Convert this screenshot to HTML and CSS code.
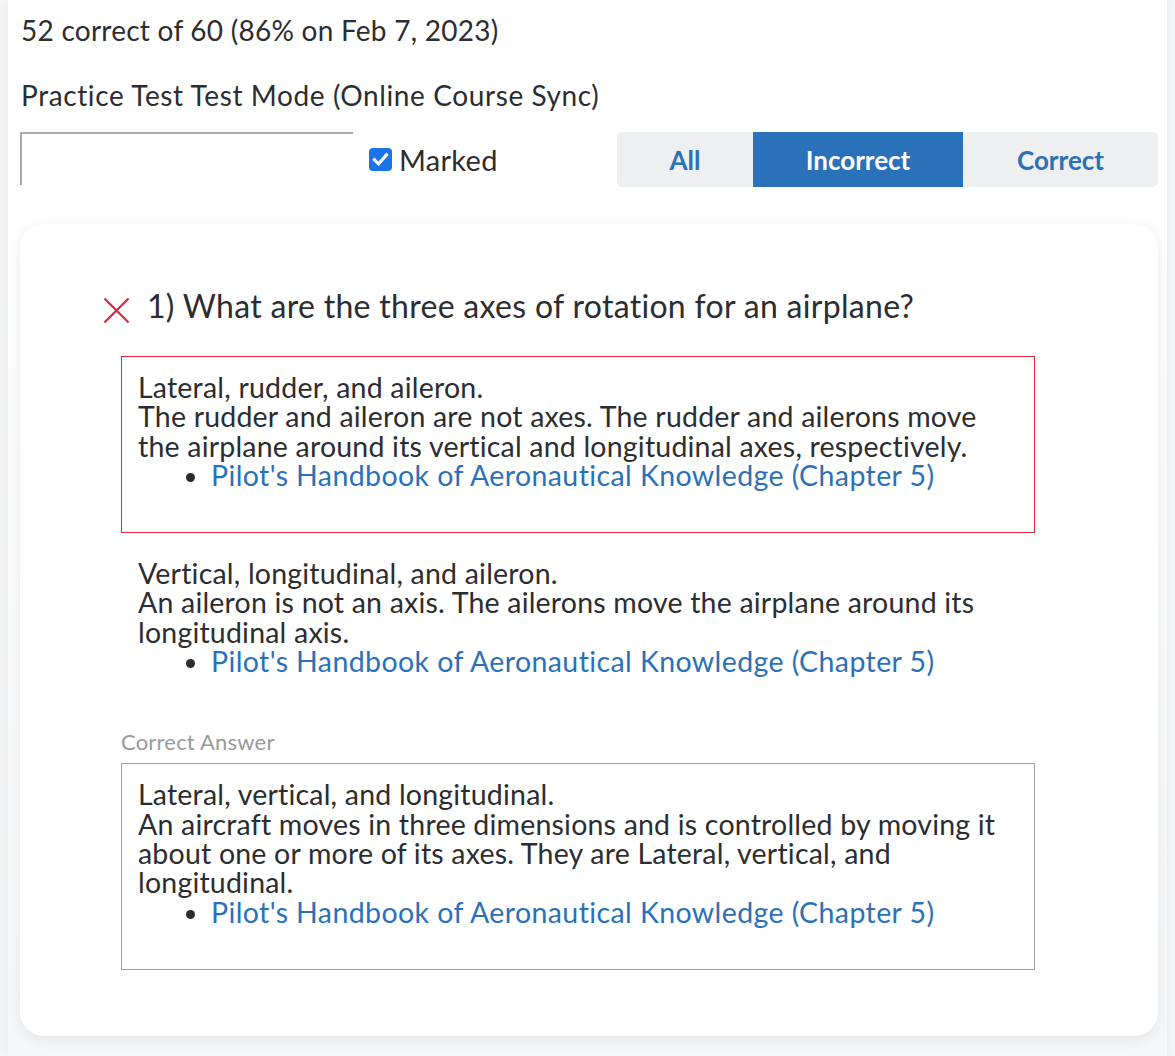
FILE: index.html
```html
<!DOCTYPE html>
<html>
<head>
<meta charset="utf-8">
<link rel="stylesheet" href="styles.css">
</head>
<body>
<div class="page">
  <div class="top">
    <div class="score">52 correct of 60 (86% on Feb 7, 2023)</div>
    <div class="mode">Practice Test Test Mode (Online Course Sync)</div>
    <div class="controls">
      <div class="search"></div>
      <label class="marked">
        <span class="check"><svg width="23" height="23" viewBox="0 0 23 23"><rect x="0" y="0" width="23" height="23" rx="4" fill="#1a73e8"/><path d="M5.5 11.8 L9.6 16 L17.5 6.8" fill="none" stroke="#fff" stroke-width="3.2" stroke-linecap="square"/></svg></span>
        Marked
      </label>
      <div class="seg">
        <div class="seg-item seg-all">All</div>
        <div class="seg-item seg-inc active">Incorrect</div>
        <div class="seg-item seg-cor">Correct</div>
      </div>
    </div>
  </div>
  <div class="card">
    <div class="question">
      <svg class="xicon" width="28" height="28" viewBox="0 0 28 28"><path d="M1.5 1.5 L26.5 26.5 M26.5 1.5 L1.5 26.5" stroke="#dc2a3f" stroke-width="2.4" fill="none"/></svg>
      <span>1) What are the three axes of rotation for an airplane?</span>
    </div>
    <div class="answer wrong">
      <div>Lateral, rudder, and aileron.</div>
      <div>The rudder and aileron are not axes. The rudder and ailerons move the airplane around its vertical and longitudinal axes, respectively.</div>
      <ul><li><a href="#">Pilot's Handbook of Aeronautical Knowledge (Chapter 5)</a></li></ul>
    </div>
    <div class="answer plain">
      <div>Vertical, longitudinal, and aileron.</div>
      <div>An aileron is not an axis. The ailerons move the airplane around its longitudinal axis.</div>
      <ul><li><a href="#">Pilot's Handbook of Aeronautical Knowledge (Chapter 5)</a></li></ul>
    </div>
    <div class="label">Correct Answer</div>
    <div class="answer right">
      <div>Lateral, vertical, and longitudinal.</div>
      <div>An aircraft moves in three dimensions and is controlled by moving it about one or more of its axes. They are Lateral, vertical, and longitudinal.</div>
      <ul><li><a href="#">Pilot's Handbook of Aeronautical Knowledge (Chapter 5)</a></li></ul>
    </div>
  </div>
</div>
</body>
</html>
```
FILE: styles.css
```css
html, body {
  margin: 0;
  padding: 0;
}
body {
  background: #f4f5f6;
  font-family: Lato, "Open Sans", sans-serif;
  color: #2b2d31;
  height: 1056px;
  overflow: hidden;
}
.page {
  margin: 0 8px;
  box-shadow: 0 0 10px rgba(0,0,0,0.06);
  padding: 0 9px 20px 12px;
  min-height: 1056px;
  box-sizing: border-box;
  background: linear-gradient(#fff 0, #fff 200px, #f6f7f8 1056px);
}
.top {
  padding-top: 10px;
}
.score {
  font-size: 28px;
  letter-spacing: 0.25px;
  line-height: 40px;
  padding-left: 1px;
}
.mode {
  font-size: 28px;
  letter-spacing: 0.6px;
  line-height: 40px;
  margin-top: 25px;
  padding-left: 1px;
}
.controls {
  display: flex;
  align-items: center;
  margin-top: 17px;
  height: 55px;
}
.search {
  width: 333px;
  height: 53px;
  border-top: 2px solid #a9a9a9;
  border-left: 2px solid #a9a9a9;
  box-sizing: border-box;
  align-self: flex-start;
}
.marked {
  display: flex;
  align-items: center;
  font-size: 29px;
  letter-spacing: 0.3px;
  margin-left: 16px;
  gap: 7px;
}
.check {
  display: flex;
}
.seg {
  margin-left: auto;
  display: flex;
  width: 541px;
  height: 55px;
  background: #eeeff1;
  border-radius: 5px;
  overflow: hidden;
}
.seg-item {
  display: flex;
  align-items: center;
  justify-content: center;
  font-size: 26px;
  font-weight: 700;
  color: #2a71b9;
}
.seg-all { width: 136px; }
.seg-inc { width: 210px; }
.seg-cor { flex: 1; }
.seg-item.active {
  background: #2a71b9;
  color: #fff;
}
.card {
  margin-top: 37px;
  background: #fff;
  border-radius: 24px;
  box-shadow: 0 4px 14px rgba(0,0,0,0.08);
  padding: 64px 123px 66px 101px;
}
.question {
  display: flex;
  align-items: center;
  font-size: 32px;
  letter-spacing: 0.3px;
  line-height: 36px;
  height: 36px;
}
.xicon {
  width: 27px;
  height: 27px;
  margin: 9px 17px 0 -18px;
}
.answer {
  font-size: 28.5px;
  letter-spacing: 0.2px;
  line-height: 29.3px;
  padding: 16px 26px 16px 16px;
  border: 1px solid transparent;
}
.answer.wrong {
  margin-top: 32px;
  border-color: #dc2a3f;
}
.answer.plain {
  margin-top: 9px;
}
.answer.right {
  border-color: #a0a0a0;
}
.answer ul {
  margin: 0 0 26px 0;
  padding-left: 73px;
}
.answer a {
  font-size: 28.5px;
  letter-spacing: 0.4px;
  color: #2a71b9;
  text-decoration: none;
}
.label {
  margin-top: 6px;
  font-size: 22px;
  letter-spacing: 0.2px;
  line-height: 34px;
  color: #9a9a9a;
  margin-bottom: 4px;
}
```
